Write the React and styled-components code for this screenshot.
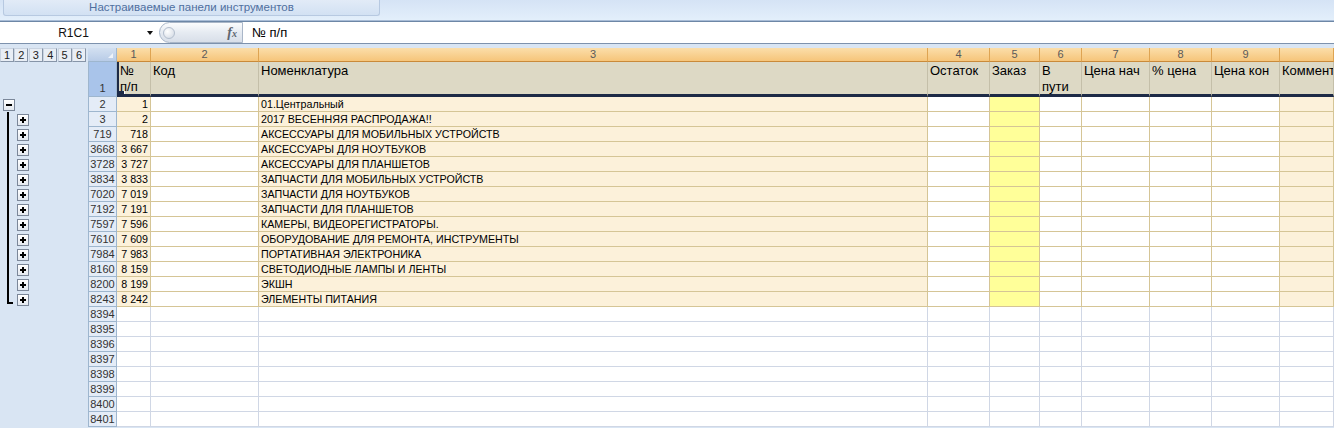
import styled, { createGlobalStyle, css } from "styled-components";

const GlobalStyle = createGlobalStyle`
  html, body { margin: 0; padding: 0; }
  body {
    font-family: "Liberation Sans", Arial, sans-serif;
    background: #d9e5f3;
    overflow: hidden;
  }
`;

const GRID = "88px 29px 34px 108px 669px 62px 50px 42px 68px 62px 68px 1fr";

const Window = styled.div`
  width: 1334px;
  height: 428px;
  overflow: hidden;
  background: #d9e5f3;
`;

const TopBar = styled.div`
  height: 20px;
  padding-left: 3px;
  background: linear-gradient(#d5e3f5, #e3effb);
  border-bottom: 1px solid #a8bcd6;
`;

const Tab = styled.div`
  width: 377px;
  height: 16px;
  box-sizing: border-box;
  border: 1px solid #b7c9e1;
  border-top: none;
  border-radius: 0 0 3px 3px;
  background: linear-gradient(#e2ebf7, #d2e1f3);
  color: #4f6f9f;
  font-size: 11.5px;
  line-height: 15px;
  text-align: center;
`;

const FormulaBar = styled.div`
  height: 21px;
  display: flex;
  background: #fff;
  border-top: 1px solid #6d87a6;
  border-bottom: 1px solid #7d92ad;
`;

const NameBox = styled.div`
  width: 159px;
  display: flex;
  align-items: center;
`;

const NameText = styled.div`
  flex: 1;
  text-align: center;
  font-size: 12px;
  color: #111;
`;

const DropArrow = styled.div`
  width: 0;
  height: 0;
  margin-right: 6px;
  border-left: 3.5px solid transparent;
  border-right: 3.5px solid transparent;
  border-top: 4px solid #111;
`;

const Pill = styled.div`
  width: 84px;
  box-sizing: border-box;
  display: flex;
  align-items: center;
  justify-content: space-between;
  padding: 0 5px 0 3px;
  background: linear-gradient(#fbfcfd, #e6ebf2 50%, #d8dfe9);
  border: 1px solid #a9b6c8;
  border-radius: 11px 0 0 11px;
`;

const Knob = styled.div`
  width: 10px;
  height: 10px;
  border-radius: 50%;
  border: 1px solid #b3becd;
  background: radial-gradient(circle at 35% 35%, #ffffff, #cfd7e2);
`;

const Fx = styled.span`
  font-family: "Liberation Serif", "Times New Roman", serif;
  font-style: italic;
  font-weight: bold;
  font-size: 14px;
  color: #5f6670;

  sub {
    font-size: 10px;
    vertical-align: baseline;
  }
`;

const FormulaInput = styled.div`
  flex: 1;
  padding-left: 9px;
  font-size: 13px;
  line-height: 21px;
  color: #000;
`;

const Sheet = styled.div`
  margin-top: 4px;
`;

const Row = styled.div`
  display: grid;
  grid-template-columns: ${GRID};
  height: ${(p) => p.$h}px;
`;

const Levels = styled.div`
  display: flex;
  gap: 0.4px;
  width: 86px;
`;

const LevelBtn = styled.div`
  flex: 1;
  box-sizing: border-box;
  border: 1px solid #8795a8;
  border-top-color: #c9d3e0;
  border-left-color: #c9d3e0;
  background: #e9eef5;
  font-size: 11px;
  line-height: 12px;
  text-align: center;
  color: #222;
`;

const Corner = styled.div`
  box-sizing: border-box;
  display: flex;
  justify-content: flex-end;
  align-items: flex-end;
  padding: 0 3px 3px 0;
  background: linear-gradient(#d3e0f1, #b8cce7);
  border-right: 1px solid #9eb6ce;
  border-bottom: 1px solid #9eb6ce;
`;

const CornerMark = styled.div`
  width: 0;
  height: 0;
  border-left: 5px solid transparent;
  border-bottom: 5px solid #eef3fa;
`;

const ColHead = styled.div`
  box-sizing: border-box;
  background: linear-gradient(#fbdeaa, #f6c57a);
  border-right: 1px solid #dea452;
  border-bottom: 1px solid #c98a3a;
  color: #5a5a5a;
  font-size: 11px;
  line-height: 13px;
  text-align: center;
  overflow: hidden;
`;

const Outline = styled.div`
  display: flex;
  align-items: center;
  padding-left: ${(p) => (p.$top ? 3 : 7)}px;
  background: #d9e5f3;
`;

const Bracket = styled.div`
  align-self: flex-start;
  box-sizing: border-box;
  width: 8px;
  height: ${(p) => (p.$last ? 12 : 15)}px;
  margin-right: 2px;
  border-left: 2px solid #000;
  ${(p) =>
    p.$last &&
    css`
      width: 6px;
      margin-right: 4px;
      border-bottom: 2px solid #000;
    `}
`;

const OutlineBtn = styled.div`
  position: relative;
  width: 12px;
  height: 12px;
  box-sizing: border-box;
  border: 1px solid #7b8799;
  background: linear-gradient(#ffffff, #e3e8ef);

  &::before {
    content: "";
    position: absolute;
    left: 2px;
    right: 2px;
    top: 4px;
    height: 2px;
    background: #000;
  }

  ${(p) =>
    !p.$open &&
    css`
      &::after {
        content: "";
        position: absolute;
        top: 2px;
        bottom: 2px;
        left: 4px;
        width: 2px;
        background: #000;
      }
    `}
`;

const RowHead = styled.div`
  box-sizing: border-box;
  display: flex;
  justify-content: center;
  align-items: ${(p) => (p.$selected ? "flex-end" : "center")};
  padding-bottom: ${(p) => (p.$selected ? 2 : 0)}px;
  background: ${(p) => (p.$selected ? "#a9c4ea" : "#e4ecf7")};
  border-left: 1px solid #9eb6ce;
  border-right: 1px solid #9eb6ce;
  border-bottom: 1px solid #9eb6ce;
  color: #333;
  font-size: 11px;
`;

const HeadCell = styled.div`
  position: relative;
  box-sizing: border-box;
  padding: 1px 2px 0;
  background: #ddd9c5;
  border-right: 1px solid #c4bfa9;
  border-bottom: 3px solid #1d2a46;
  ${(p) => p.$first && "border-left: 2px solid #1d2a46; padding-left: 1px;"}
  font-size: 13px;
  line-height: 16px;
  color: #000;
  overflow: hidden;
`;

const FillHandle = styled.div`
  position: absolute;
  left: 0;
  bottom: -3px;
  width: 5px;
  height: 5px;
  background: #1d2a46;
  border: 1px solid #fff;
  border-left: none;
  border-top: none;
`;

const TONES = {
  beige: "#fcf1da",
  white: "#ffffff",
  yellow: "#ffff99",
};

const Cell = styled.div`
  box-sizing: border-box;
  padding: 0 2px;
  background: ${(p) => TONES[p.$tone] || "#fff"};
  border-right: 1px solid ${(p) => (p.$empty ? "#d0d7e5" : "#d5c596")};
  border-bottom: 1px solid ${(p) => (p.$empty ? "#d0d7e5" : "#d5c596")};
  font-size: 10.7px;
  line-height: 14px;
  color: #000;
  text-align: ${(p) => (p.$right ? "right" : "left")};
  white-space: nowrap;
  overflow: hidden;
`;

const columns = ["1", "2", "3", "4", "5", "6", "7", "8", "9", ""];
const headers = [
  "№ п/п",
  "Код",
  "Номенклатура",
  "Остаток",
  "Заказ",
  "В пути",
  "Цена нач",
  "% цена",
  "Цена кон",
  "Комментарий",
];
const tones = ["beige", "white", "beige", "white", "yellow", "white", "white", "white", "white", "beige"];

const data = [
  ["2", "1", "01.Центральный"],
  ["3", "2", "2017 ВЕСЕННЯЯ РАСПРОДАЖА!!"],
  ["719", "718", "АКСЕССУАРЫ ДЛЯ МОБИЛЬНЫХ УСТРОЙСТВ"],
  ["3668", "3 667", "АКСЕССУАРЫ ДЛЯ НОУТБУКОВ"],
  ["3728", "3 727", "АКСЕССУАРЫ ДЛЯ ПЛАНШЕТОВ"],
  ["3834", "3 833", "ЗАПЧАСТИ ДЛЯ МОБИЛЬНЫХ УСТРОЙСТВ"],
  ["7020", "7 019", "ЗАПЧАСТИ ДЛЯ НОУТБУКОВ"],
  ["7192", "7 191", "ЗАПЧАСТИ ДЛЯ ПЛАНШЕТОВ"],
  ["7597", "7 596", "КАМЕРЫ, ВИДЕОРЕГИСТРАТОРЫ."],
  ["7610", "7 609", "ОБОРУДОВАНИЕ ДЛЯ РЕМОНТА, ИНСТРУМЕНТЫ"],
  ["7984", "7 983", "ПОРТАТИВНАЯ ЭЛЕКТРОНИКА"],
  ["8160", "8 159", "СВЕТОДИОДНЫЕ ЛАМПЫ И ЛЕНТЫ"],
  ["8200", "8 199", "ЭКШН"],
  ["8243", "8 242", "ЭЛЕМЕНТЫ ПИТАНИЯ"],
];

const emptyRows = ["8394", "8395", "8396", "8397", "8398", "8399", "8400", "8401"];

export default function App() {
  return (
    <>
      <GlobalStyle />
      <Window>
        <TopBar>
          <Tab>Настраиваемые панели инструментов</Tab>
        </TopBar>
        <FormulaBar>
          <NameBox>
            <NameText>R1C1</NameText>
            <DropArrow />
          </NameBox>
          <Pill>
            <Knob />
            <Fx>
              f<sub>x</sub>
            </Fx>
          </Pill>
          <FormulaInput>№ п/п</FormulaInput>
        </FormulaBar>

        <Sheet>
          <Row $h={14}>
            <Levels>
              {[1, 2, 3, 4, 5, 6].map((n) => (
                <LevelBtn key={n}>{n}</LevelBtn>
              ))}
            </Levels>
            <Corner>
              <CornerMark />
            </Corner>
            {columns.map((c, i) => (
              <ColHead key={i}>{c}</ColHead>
            ))}
          </Row>

          <Row $h={35}>
            <Outline />
            <RowHead $selected>1</RowHead>
            {headers.map((h, i) => (
              <HeadCell key={i} $first={i === 0}>
                {h}
                {i === 0 && <FillHandle />}
              </HeadCell>
            ))}
          </Row>

          {data.map(([rn, num, name], r) => (
            <Row $h={15} key={rn}>
              <Outline $top={r === 0}>
                {r > 0 && <Bracket $last={r === data.length - 1} />}
                <OutlineBtn $open={r === 0} />
              </Outline>
              <RowHead>{rn}</RowHead>
              {tones.map((t, i) => (
                <Cell key={i} $tone={t} $right={i === 0}>
                  {i === 0 ? num : i === 2 ? name : ""}
                </Cell>
              ))}
            </Row>
          ))}

          {emptyRows.map((rn) => (
            <Row $h={15} key={rn}>
              <Outline />
              <RowHead>{rn}</RowHead>
              {tones.map((t, i) => (
                <Cell key={i} $empty />
              ))}
            </Row>
          ))}
        </Sheet>
      </Window>
    </>
  );
}
